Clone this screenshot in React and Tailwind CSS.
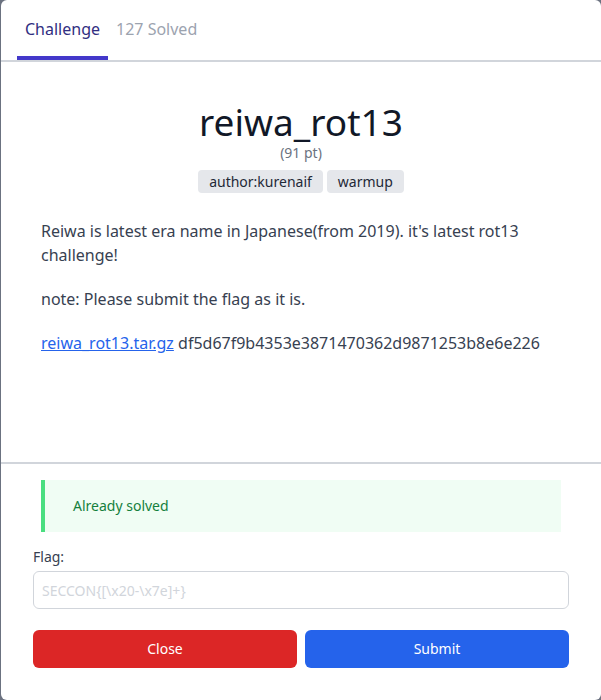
export default function App() {
  return (
    <div className="w-[601px] h-[700px] bg-[#6b7280]" style={{ fontFamily: '"Noto Sans", sans-serif' }}>
      <div className="ml-[1px] w-[600px] h-[700px] bg-white rounded-md flex flex-col overflow-hidden">
        <div className="flex border-b-2 border-[#d1d5db] pl-4">
          <div className="px-2 pt-[17px] pb-[15px] border-b-4 border-[#4338ca] text-base leading-6 text-[#312e81]">
            Challenge
          </div>
          <div className="px-2 pt-[17px] pb-[15px] border-b-4 border-transparent text-base leading-6 text-[#9ca3af]">
            127 Solved
          </div>
        </div>
        <div className="flex-1 px-10 pt-[39px]">
          <div className="flex flex-col items-center">
            <h1 className="text-[37px] leading-[42px] text-[#111827]">reiwa_rot13</h1>
            <div className="text-sm leading-5 text-[#6b7280]">(91 pt)</div>
            <div className="mt-[7px] flex gap-1 justify-center">
              <span className="h-[23px] px-[11px] flex items-center rounded bg-[#e5e7eb] text-sm text-[#1f2937]">author:kurenaif</span>
              <span className="h-[23px] px-[11px] flex items-center rounded bg-[#e5e7eb] text-sm text-[#1f2937]">warmup</span>
            </div>
          </div>
          <div className="mt-[26px] text-base leading-6 text-[#374151] flex flex-col gap-5">
            <p>Reiwa is latest era name in Japanese(from 2019). it's latest rot13 challenge!</p>
            <p>note: Please submit the flag as it is.</p>
            <p>
              <a className="text-[#2563eb] underline" href="#">reiwa_rot13.tar.gz</a> df5d67f9b4353e3871470362d9871253b8e6e226
            </p>
          </div>
        </div>
        <div className="border-t-2 border-[#d1d5db] px-8 pt-4 pb-8">
          <div className="mx-2 border-l-4 border-[#4ade80] bg-[#f0fdf4] p-4">
            <div className="ml-3 text-sm leading-5 text-[#15803d]">Already solved</div>
          </div>
          <label className="block mt-[15px] text-sm leading-5 text-[#374151]">Flag:</label>
          <input
            className="mt-1 block w-full h-[38px] px-2 border border-[#d1d5db] rounded-md text-sm placeholder:text-[#d1d5db] outline-none"
            placeholder="SECCON{[\x20-\x7e]+}"
          />
          <div className="mt-[21px] flex gap-2">
            <button className="flex-1 h-[38px] rounded-md bg-[#dc2626] text-white text-sm">Close</button>
            <button className="flex-1 h-[38px] rounded-md bg-[#2563eb] text-white text-sm">Submit</button>
          </div>
        </div>
      </div>
    </div>
  );
}
